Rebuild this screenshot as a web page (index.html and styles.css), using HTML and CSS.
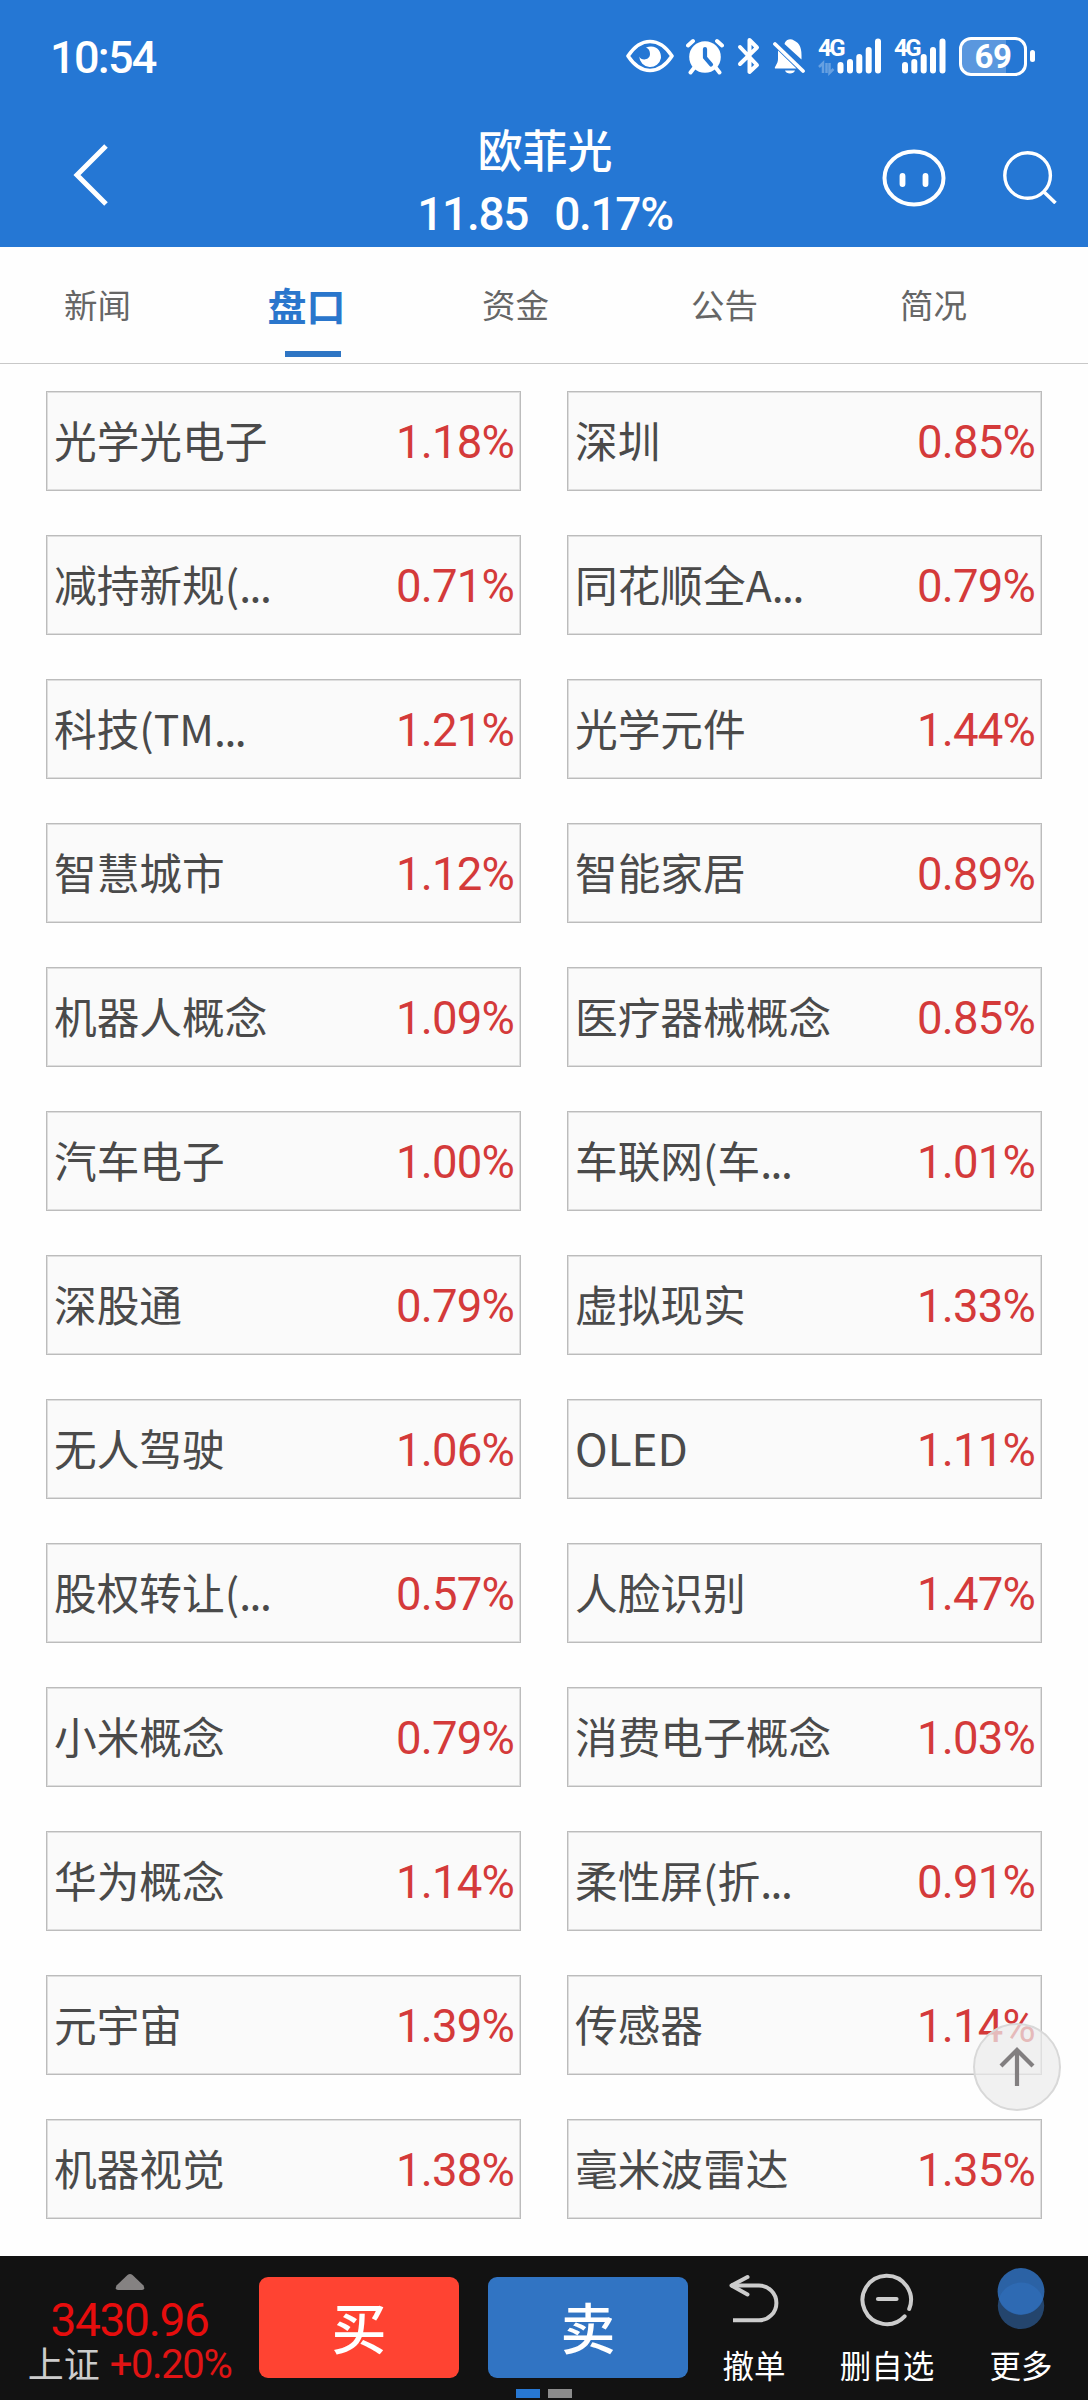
FILE: index.html
```html
<!DOCTYPE html>
<html lang="zh-CN">
<head>
    <meta charset="UTF-8">
    <meta name="viewport" content="width=device-width, initial-scale=1.0">
    <title>欧菲光 - 盘口</title>
    <link rel="stylesheet" href="styles.css">
</head>
<body>
    <header class="header">
        <div class="status-bar">
            <span class="time">10:54</span>
            <div class="status-icons">
                <!-- 护眼 -->
                <svg class="icon-eye" width="48" height="40" viewBox="0 0 48 40">
                    <path d="M2 20C8 11 16 5.500 24 5.500S40 11 46 20C40 29 32 34.500 24 34.500S8 29 2 20Z" fill="none" stroke="#fff" stroke-width="3.600" stroke-linejoin="round"/>
                    <path d="M20 11.500C30 8 35.500 15 35 22A11 11 0 0 1 13.200 20.500C15 25 24 24.500 24 18C24 14.500 22.500 12.500 20 11.500Z" fill="#fff"/>
                </svg>
                <!-- 闹钟 -->
                <svg class="icon-alarm" width="38" height="40" viewBox="0 0 38 40">
                    <path d="M2 9.500L7 5M36 9.500L31 5M8 32l-3.500 4.500M30 32l3.500 4.500" stroke="#fff" stroke-width="4" stroke-linecap="round"/>
                    <circle cx="19" cy="21" r="15.800" fill="#fff"/>
                    <path d="M19 13v8.500l6 7" fill="none" stroke="#2577d4" stroke-width="4.200" stroke-linecap="round" stroke-linejoin="round"/>
                </svg>
                <!-- 蓝牙 -->
                <svg class="icon-bt" width="24" height="40" viewBox="0 0 24 40">
                    <path d="M3 11l17 18-7.500 7V4l7.500 7.500L3 28" fill="none" stroke="#fff" stroke-width="4" stroke-linecap="round" stroke-linejoin="round"/>
                </svg>
                <!-- 静音 -->
                <svg class="icon-bell" width="33" height="40" viewBox="0 0 33 40">
                    <path d="M12 6.500C14 3 18 2.500 21 4.500C27 7.500 29 12 28.500 23.500L11.500 8ZM5 14.500L23.500 32.500H2C1 31 5 28 5 23ZM12 34.500h10c-1 4-9 4-10 0Z" fill="#fff"/>
                    <path d="M2 8l28 27" stroke="#fff" stroke-width="3.800" stroke-linecap="round"/>
                </svg>
                <div class="signal">
                    <span class="net">4G</span>
                    <svg width="64" height="40" viewBox="0 0 64 40">
                        <path d="M1 31l4-4v10M8.500 37V27M11.500 27v10l4-4" fill="none" stroke="#fff" stroke-opacity=".3" stroke-width="2.500"/>
                        <path d="M22.500 29v5.500M32 26v8.500M41.300 21v13.500M50.700 14v20.500M60 5.500v29" stroke="#fff" stroke-width="6" stroke-linecap="round"/>
                    </svg>
                </div>
                <div class="signal">
                    <span class="net">4G</span>
                    <svg width="52" height="40" viewBox="0 0 52 40">
                        <path d="M11 29v5.500M20.300 26v8.500M29.700 21v13.500M39 14v20.500M48.500 5.500v29" stroke="#fff" stroke-width="6" stroke-linecap="round"/>
                    </svg>
                </div>
                <div class="battery"><span>69</span></div>
            </div>
        </div>
        <div class="title-bar">
            <svg class="back" width="40" height="66" viewBox="0 0 40 66">
                <path d="M35 4L6 33l29 29" fill="none" stroke="#fff" stroke-width="5"/>
            </svg>
            <div class="stock">
                <h1>欧菲光</h1>
                <p><span>11.85</span><span>0.17%</span></p>
            </div>
            <div class="title-actions">
                <svg width="64" height="60" viewBox="0 0 64 60">
                    <ellipse cx="32" cy="30" rx="29.500" ry="26.500" fill="none" stroke="#fff" stroke-width="4"/>
                    <path d="M20.500 28v8M43.500 28v8" stroke="#fff" stroke-width="5.800" stroke-linecap="round"/>
                </svg>
                <svg width="56" height="56" viewBox="0 0 56 56">
                    <circle cx="25.600" cy="27.500" r="22.800" fill="none" stroke="#fff" stroke-width="3.400"/>
                    <path d="M41 43l12.500 12" stroke="#fff" stroke-width="3.600"/>
                </svg>
            </div>
        </div>
    </header>

    <nav class="tabs">
        <a class="tab">新闻</a>
        <a class="tab active">盘口</a>
        <a class="tab">资金</a>
        <a class="tab">公告</a>
        <a class="tab">简况</a>
    </nav>

    <main class="plates">
        <div class="plate"><span class="name">光学光电子</span><span class="rate">1.18%</span></div>
        <div class="plate"><span class="name">深圳</span><span class="rate">0.85%</span></div>
        <div class="plate"><span class="name">减持新规(<i>...</i></span><span class="rate">0.71%</span></div>
        <div class="plate"><span class="name">同花顺全A<i>...</i></span><span class="rate">0.79%</span></div>
        <div class="plate"><span class="name">科技(TM<i>...</i></span><span class="rate">1.21%</span></div>
        <div class="plate"><span class="name">光学元件</span><span class="rate">1.44%</span></div>
        <div class="plate"><span class="name">智慧城市</span><span class="rate">1.12%</span></div>
        <div class="plate"><span class="name">智能家居</span><span class="rate">0.89%</span></div>
        <div class="plate"><span class="name">机器人概念</span><span class="rate">1.09%</span></div>
        <div class="plate"><span class="name">医疗器械概念</span><span class="rate">0.85%</span></div>
        <div class="plate"><span class="name">汽车电子</span><span class="rate">1.00%</span></div>
        <div class="plate"><span class="name">车联网(车<i>...</i></span><span class="rate">1.01%</span></div>
        <div class="plate"><span class="name">深股通</span><span class="rate">0.79%</span></div>
        <div class="plate"><span class="name">虚拟现实</span><span class="rate">1.33%</span></div>
        <div class="plate"><span class="name">无人驾驶</span><span class="rate">1.06%</span></div>
        <div class="plate"><span class="name latin">OLED</span><span class="rate">1.11%</span></div>
        <div class="plate"><span class="name">股权转让(<i>...</i></span><span class="rate">0.57%</span></div>
        <div class="plate"><span class="name">人脸识别</span><span class="rate">1.47%</span></div>
        <div class="plate"><span class="name">小米概念</span><span class="rate">0.79%</span></div>
        <div class="plate"><span class="name">消费电子概念</span><span class="rate">1.03%</span></div>
        <div class="plate"><span class="name">华为概念</span><span class="rate">1.14%</span></div>
        <div class="plate"><span class="name">柔性屏(折<i>...</i></span><span class="rate">0.91%</span></div>
        <div class="plate"><span class="name">元宇宙</span><span class="rate">1.39%</span></div>
        <div class="plate"><span class="name">传感器</span><span class="rate">1.14%</span></div>
        <div class="plate"><span class="name">机器视觉</span><span class="rate">1.38%</span></div>
        <div class="plate"><span class="name">毫米波雷达</span><span class="rate">1.35%</span></div>
    </main>

    <!-- 回到顶部 -->
    <a class="to-top">
        <svg width="40" height="44" viewBox="0 0 40 44">
            <path d="M20 41V5M4 21L20 5l16 16" fill="none" stroke="#827f80" stroke-width="4.200"/>
        </svg>
    </a>

    <footer class="footer">
        <div class="index">
            <svg width="30" height="18" viewBox="0 0 30 18">
                <path d="M12.500 2Q15 0 17.500 2L28.500 12.500Q30.500 17 27 17H3Q-.5 17 1.500 12.500Z" fill="#858282"/>
            </svg>
            <div class="index-value">3430.96</div>
            <div class="index-change"><span>上证</span><b>+0.20%</b></div>
        </div>
        <div class="trade">
            <a class="btn buy">买</a>
            <a class="btn sell">卖</a>
            <div class="pager"><i class="on"></i><i></i></div>
        </div>
        <div class="action action-cancel">
            <svg width="56" height="64" viewBox="0 0 56 64">
                <path d="M5 17.500h28a17.400 17.400 0 0 1 0 34.800H7" fill="none" stroke="#ccc" stroke-width="4"/>
                <path d="M21.500 9L5.500 17.500l16 9" fill="none" stroke="#ccc" stroke-width="4" stroke-linecap="round" stroke-linejoin="round"/>
            </svg>
            <span>撤单</span>
        </div>
        <div class="action">
            <svg width="56" height="64" viewBox="0 0 56 64">
                <path d="M50.200 41A24.200 24.200 0 1 0 45.600 48.300" fill="none" stroke="#ccc" stroke-width="4" stroke-linecap="round"/>
                <path d="M19 31h18.500" stroke="#ccc" stroke-width="4.200" stroke-linecap="round"/>
            </svg>
            <span>删自选</span>
        </div>
        <div class="action">
            <svg width="56" height="64" viewBox="0 0 56 64">
                <circle cx="28" cy="37.800" r="23.200" fill="#24456d"/>
                <circle cx="28" cy="23.500" r="23.400" fill="#2b62a5"/>
                <path d="M5.900 30.600a23.200 23.200 0 0 1 44.200 0a23.400 23.400 0 0 1-44.200 0Z" fill="#2e6ab3"/>
            </svg>
            <span>更多</span>
        </div>
    </footer>
</body>
</html>
```

FILE: styles.css
```css
* {
    box-sizing: border-box;
}
body {
    margin: 0;
    width: 1088px;
    height: 2400px;
    display: flex;
    flex-direction: column;
    background: #fefefe;
    font-family: "Noto Sans CJK SC", sans-serif;
    color: #4a4a4a;
    overflow: hidden;
}
svg {
    display: block;
    flex: none;
}

/* 顶部 */
.header {
    height: 247px;
    flex: none;
    background: #2577d4;
    color: #fff;
}
.status-bar {
    height: 112px;
    padding: 36px 54px 0 50px;
    display: flex;
    justify-content: space-between;
}
.time {
    font: 500 45px/43px Roboto, sans-serif;
    letter-spacing: -1.7px;
}
.status-icons {
    display: flex;
    height: 40px;
}
.icon-alarm {
    margin-left: 12px;
}
.icon-bt {
    margin-left: 13px;
}
.icon-bell {
    margin-left: 12px;
}
.signal {
    position: relative;
    margin-left: 12px;
}
.net {
    position: absolute;
    left: 0;
    top: 2px;
    font: 700 24px/20px Roboto, sans-serif;
    letter-spacing: -2.5px;
}
.battery {
    position: relative;
    width: 68px;
    height: 39px;
    margin: 1px 7px 0 13px;
    border: 3.5px solid #fff;
    border-radius: 12px;
    background: linear-gradient(to right, #5a97de 44px, transparent 44px);
    font: 700 33px/34px Roboto, sans-serif;
    letter-spacing: -0.5px;
    text-align: center;
}
.battery::after {
    content: "";
    position: absolute;
    right: -11px;
    top: 10px;
    width: 5px;
    height: 12px;
    border-radius: 3px;
    background: #fff;
}
.title-bar {
    display: flex;
    padding: 0 30px 0 71px;
    height: 135px;
}
.back {
    margin-top: 30px;
}
.stock {
    width: 300px;
    margin-left: 284px;
    text-align: center;
}
.stock h1 {
    margin: 8px 0 0;
    font-size: 45px;
    font-weight: 500;
    line-height: 58px;
}
.stock p {
    margin: 6px 0 0;
    display: flex;
    justify-content: center;
    gap: 26px;
    font: 500 46px/60px Roboto, sans-serif;
    letter-spacing: -1.3px;
}
.title-actions {
    display: flex;
    gap: 56px;
    padding-top: 36px;
    margin-left: auto;
}

/* 标签栏 */
.tabs {
    height: 117px;
    flex: none;
    display: flex;
    margin-left: -7px;
    border-bottom: 1px solid #c8c8c8;
}
.tab {
    width: 209px;
    flex: none;
    position: relative;
    text-align: center;
    font-size: 33.5px;
    line-height: 114px;
    color: #666;
}
.tab.active {
    font-size: 39px;
    font-weight: 700;
    color: #2a76cc;
}
.tab.active::after {
    content: "";
    position: absolute;
    left: 83px;
    bottom: 6px;
    width: 56px;
    height: 6px;
    background: #2e75c4;
}

/* 板块列表 */
.plates {
    flex: 1;
    display: grid;
    grid-template-columns: 475px 475px;
    grid-auto-rows: 100px;
    gap: 44px 46px;
    padding: 27px 46px 0;
}
.plate {
    display: flex;
    justify-content: space-between;
    padding: 0 6px 0 7px;
    background: #fafafa;
    border: 1px solid #bcbcbc;
    box-shadow: inset 0 0 0 1px #dedede;
}
.name {
    font-size: 42.7px;
    line-height: 95px;
    white-space: nowrap;
}
.name.latin {
    font-size: 44px;
}
.name i {
    font-style: normal;
    letter-spacing: -1.5px;
}
.rate {
    padding-top: 2px;
    font: 400 45.5px/98px Roboto, sans-serif;
    letter-spacing: -0.8px;
    color: #d43a3a;
}
.to-top {
    position: absolute;
    left: 973px;
    top: 2023px;
    width: 88px;
    height: 88px;
    border: 2px solid #d8d8d8;
    border-radius: 50%;
    background: rgba(236, 236, 236, 0.72);
    display: flex;
    align-items: center;
    justify-content: center;
}

/* 底部 */
.footer {
    height: 144px;
    flex: none;
    display: flex;
    background: #121212;
    color: #fff;
}
.index {
    width: 259px;
    display: flex;
    flex-direction: column;
    align-items: center;
    padding-top: 17px;
}
.index-value {
    margin-top: 5px;
    font: 400 46px/48px Roboto, sans-serif;
    letter-spacing: -1.3px;
    color: #e60d0d;
}
.index-change {
    display: flex;
    gap: 10px;
    font-size: 36px;
    line-height: 36px;
    color: #ccc;
}
.index-change b {
    font: 400 40px/42px Roboto, sans-serif;
    letter-spacing: -1.4px;
    color: #e01414;
}
.trade {
    width: 429px;
    display: grid;
    grid-template-columns: 200px 200px;
    grid-template-rows: 101px 9px;
    gap: 11px 29px;
    padding-top: 21px;
}
.btn {
    border-radius: 9px;
    font-size: 55px;
    font-weight: 500;
    line-height: 97px;
    text-align: center;
}
.buy {
    background: #ff4332;
}
.sell {
    background: #3174c3;
}
.pager {
    grid-column: 1 / 3;
    display: flex;
    gap: 8px;
    padding-left: 257px;
}
.pager i {
    width: 24px;
    background: #8c8c8c;
}
.pager i.on {
    background: #2777d2;
}
.action {
    width: 134px;
    display: flex;
    flex-direction: column;
    align-items: center;
    padding-top: 12px;
    font-size: 31.5px;
}
.action span {
    margin-top: 10px;
    line-height: 44px;
}
.action-cancel {
    width: 132px;
}
```
